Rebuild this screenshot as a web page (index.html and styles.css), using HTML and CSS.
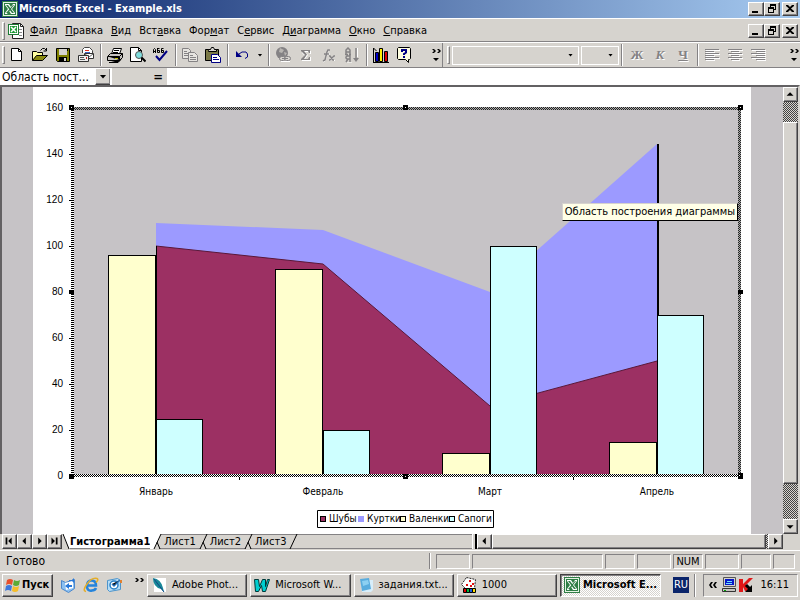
FILE: index.html
```html
<!DOCTYPE html>
<html lang="ru">
<head>
<meta charset="utf-8">
<meta name="viewport" content="width=device-width, initial-scale=1">
<title>Microsoft Excel - Example.xls</title>
<link rel="stylesheet" href="styles.css">
</head>
<body>
<svg class="defs" aria-hidden="true">
  <symbol id="excel" viewBox="0 0 16 16">
    <path fill="#2f7d45" d="M0 0h16v16H0z"/><path fill="#e4f3e4" d="M1 1h14v14H1z"/><path fill="#2f7d45" d="M2 2h12v12H2z"/>
    <path fill="#fff" d="M3 3h4l2 3 2-3h2v1l-3 4 3 4v1H9l-2-3-2 3H3v-1l3-4-3-4z"/>
    <path fill="#2f7d45" d="M4 4h2l6 8h-2zM11 4h1l-6 8H4z"/>
  </symbol>
  <symbol id="left" viewBox="0 0 15 15"><path d="M9 3v8L5 7z"/></symbol>
  <symbol id="right" viewBox="0 0 15 15"><path d="M6 3v8l4-4z"/></symbol>
  <symbol id="more" viewBox="0 0 10 14"><path d="M1 1h2l2 2-2 2H1l2-2zM6 1h2l2 2-2 2H6l2-2zM2 10h6l-3 3z"/></symbol>
</svg>

<header class="titlebar">
  <svg class="i16"><use href="#excel"/></svg>
  <h1>Microsoft Excel - Example.xls</h1>
  <div class="winbtns">
    <button aria-label="Свернуть"><svg viewBox="0 0 14 12"><path d="M3 8h6v2H3z"/></svg></button>
    <button aria-label="Восстановить"><svg viewBox="0 0 14 12"><path d="M5 1h6v6H9V6h1V3H6v1H5zM3 4h6v6H3zm1 2v3h4V6z" fill-rule="evenodd"/></svg></button>
    <button class="close" aria-label="Закрыть"><svg viewBox="0 0 14 12"><path d="M3 2h2l2 2 2-2h2v1L8 5.500 11 8v1H9L7 7 5 9H3V8l3-2.500L3 3z"/></svg></button>
  </div>
</header>

<nav class="menubar">
  <i class="grip"></i>
  <svg class="docicon" viewBox="0 0 16 16"><path fill="#fff" stroke="#222" d="M4.500.5h8l3 3v12h-11z"/><path fill="none" stroke="#222" d="M12.500.5v3h3"/><path stroke="#888" d="M11 6.500h3M11 9.500h3M11 12.500h3"/><path fill="#1e7b35" d="M0 1h11v11H0z"/><path fill="#fff" d="M1 2h9v9H1z"/><path fill="#1e9b35" d="M2 3h7v7H2z"/><path stroke="#fff" stroke-width="1.500" d="M3 4l5 5M8 4L3 9"/></svg>
  <a href="#"><u>Ф</u>айл</a><a href="#"><u>П</u>равка</a><a href="#"><u>В</u>ид</a><a href="#">Вст<u>а</u>вка</a><a href="#">Фор<u>м</u>ат</a><a href="#">С<u>е</u>рвис</a><a href="#">Д<u>и</u>аграмма</a><a href="#"><u>О</u>кно</a><a href="#"><u>С</u>правка</a>
  <div class="winbtns">
    <button aria-label="Свернуть книгу"><svg viewBox="0 0 14 12"><path d="M3 8h6v2H3z"/></svg></button>
    <button aria-label="Восстановить книгу"><svg viewBox="0 0 14 12"><path d="M5 1h6v6H9V6h1V3H6v1H5zM3 4h6v6H3zm1 2v3h4V6z" fill-rule="evenodd"/></svg></button>
    <button class="close" aria-label="Закрыть книгу"><svg viewBox="0 0 14 12"><path d="M3 2h2l2 2 2-2h2v1L8 5.500 11 8v1H9L7 7 5 9H3V8l3-2.500L3 3z"/></svg></button>
  </div>
</nav>

<div class="toolbars">
  <div class="toolbar standard">
    <i class="grip"></i>
    <button class="tool" aria-label="Создать"><svg viewBox="0 0 16 16"><path fill="#fff" stroke="#000" d="M2.500 1.500h7l3 3v9h-10z"/><path fill="none" stroke="#000" d="M9.500 1.500v3h3"/></svg></button>
    <button class="tool" aria-label="Открыть"><svg viewBox="0 0 16 16"><path fill="#ffffa0" stroke="#000" d="M.5 13.500v-9h4l1 1h5v3"/><path fill="#8a8a10" stroke="#000" d="M.5 13.500l4-5h11l-5 5z"/><path fill="none" stroke="#000" d="M8.500 3.500l2-2h2l2 2M14.500 1v3h-3"/></svg></button>
    <button class="tool" aria-label="Сохранить"><svg viewBox="0 0 16 16"><path fill="#808000" stroke="#000" d="M1.500 1.500h13v13h-12l-1-1z"/><path fill="#d6d3ce" d="M4 2h8v6H4z"/><path d="M4 10h8v4H4zM12 2h1v2h-1z"/><path fill="#d6d3ce" d="M9 11h2v3H9z"/></svg></button>
    <button class="tool" aria-label="Отправить"><svg viewBox="0 0 16 16"><path fill="#fff" stroke="#444" d="M4.500 6V2.500l2-2h5l3 3V9"/><path stroke="#e03020" d="M7 3.500h4"/><path stroke="#4060c0" d="M7 5.500h5"/><path fill="#fff" stroke="#333" d="M6.500 6.500h9v5h-9z"/><path fill="none" stroke="#666" d="M7 7l4 3 4-3"/><path fill="#eee" stroke="#333" d="M.5 8.500h10v6H.5z"/><path stroke="#555" d="M2 10.500h4M2 12.500h5"/><path fill="#c02020" d="M8 10h1v2H8z"/></svg></button>
    <i class="sep"></i>
    <button class="tool" aria-label="Печать"><svg viewBox="0 0 16 16"><path fill="#fff" stroke="#000" d="M4.500 7l2-5.500h8L12.500 7z"/><path stroke="#000" d="M7 3.500h5M6 5.500h5"/><path fill="#c6c3c0" stroke="#000" d="M.5 9.500l3-3h12v4l-3 3H.5z"/><path stroke="#000" d="M1 9.500h11.500V13M12.500 9.500l3-3M2 15.500h9l3-3"/><path fill="#cc0" d="M8 11h3v1H8z"/></svg></button>
    <button class="tool" aria-label="Предварительный просмотр"><svg viewBox="0 0 16 16"><path fill="#fff" stroke="#000" d="M.5.5h8l3 3v11H.5z"/><path fill="none" stroke="#000" d="M8.500.5v3h3"/><circle cx="9" cy="8" r="3.500" fill="#7fdede" stroke="#555"/><path stroke="#000" stroke-width="2" d="M11.500 10.500l4 4"/></svg></button>
    <button class="tool" aria-label="Орфография"><svg viewBox="0 0 16 16"><path fill="none" stroke="#000" d="M.5 6V2.500l1-1 1 1V6M.5 4.500h2M4.500 1v4.500h2v-2h-2v-2h2M10.500 1.500h-2v4h2v-2h-2"/><path fill="none" stroke="#000084" stroke-width="2" d="M3 9l3.500 4L14 4"/></svg></button>
    <i class="sep"></i>
    <button class="tool" aria-label="Копировать" disabled><svg viewBox="0 0 16 16"><path fill="#e6e4e0" stroke="#848284" d="M.5 1.500h6l2 2v8h-8z"/><path stroke="#848284" d="M2 4.500h3M2 6.500h5M2 8.500h5"/><path fill="#e6e4e0" stroke="#848284" d="M6.500 5.500h6l3 3v6h-9z"/><path stroke="#848284" d="M8 8.500h3M8 10.500h6M8 12.500h6"/></svg></button>
    <button class="tool" aria-label="Вставить"><svg viewBox="0 0 16 16"><path fill="#7b7946" stroke="#000" d="M.5 2.500h13v11H.5z"/><path fill="#d6d3ce" stroke="#000" d="M3.500 3.500v-1h2l1-2h2l1 2h2v2h-8z"/><path fill="#fff" stroke="#000084" d="M6.500 7.500h6l3 3v5h-9z"/><path stroke="#000084" d="M8 10.500h4M8 12.500h6"/></svg></button>
    <i class="sep"></i>
    <button class="tool" aria-label="Отменить"><svg viewBox="0 0 16 16"><path fill="#000084" d="M2 4v6h6z"/><path fill="none" stroke="#000084" d="M5 7l3-2h4l1.500 2v3L11 11.500"/></svg></button>
    <button class="drop" aria-label="Список отмены"></button>
    <i class="sep"></i>
    <button class="tool" aria-label="Гиперссылка" disabled><svg viewBox="0 0 16 16"><circle cx="7" cy="6" r="6" fill="#848284"/><path fill="#b8b5b1" d="M5 1l4 2-2 3-3-1zM9 5l3 1-2 3z"/><rect x="4.500" y="9.500" width="6" height="4" rx="2" fill="#d6d3ce" stroke="#848284"/><rect x="9.500" y="9.500" width="6" height="4" rx="2" fill="#d6d3ce" stroke="#848284"/><path stroke="#848284" d="M7 11.500h6"/><path stroke="#fff" d="M6 14.500h9"/></svg></button>
    <button class="tool" aria-label="Автосумма" disabled><svg viewBox="0 0 16 16"><path fill="#fff" d="M4 4h9v3h-1l-1-2H7l3 3-3 4h4l1-2h1v4H4v-2l3-3-3-3z"/><path fill="#848284" d="M3 3h9v3h-1l-1-2H6l3 3.500L6 12h4l1-2h1v3H3v-1l4-4-4-4z"/></svg></button>
    <button class="tool" aria-label="Вставка функции" disabled><svg viewBox="0 0 16 16"><path fill="none" stroke="#fff" d="M9 3L8 2.500 7 4 4 14l-2 1M4 7h5M9 9l5 5M14 9l-5 5"/><path fill="none" stroke="#848284" stroke-width="1.500" d="M9 3L7 3 6 5 4 13l-2 1M3 7h5M8 9h1l3 4h1M14 9h-1l-4 4H8"/></svg></button>
    <button class="tool" aria-label="Сортировка" disabled><svg viewBox="0 0 16 16"><path fill="none" stroke="#848284" stroke-width="1.500" d="M2 7V3l2-2 2 2v4M2 5h4M6 15V9H3L2 10v1l1 1h3M4 12l-2 3M1 7.500h3M5 7.500h2M12 1v12"/><path fill="#848284" d="M9 11h6l-3 4z"/><path stroke="#fff" d="M13.500 1v9M3 16h5"/></svg></button>
    <i class="sep"></i>
    <button class="tool" aria-label="Мастер диаграмм"><svg viewBox="0 0 16 16"><path fill="none" stroke="#000" d="M.5 1v14M0 15.500h16M.5 1l3 3"/><path stroke="#000" fill="#0000c8" d="M2.500 5.500h3v9h-3z"/><path stroke="#000" fill="#ffef00" d="M6.500 1.500h3v13h-3z"/><path stroke="#000" fill="#e00000" d="M11.500 4.500h3v10h-3z"/></svg></button>
    <button class="tool" aria-label="Справка"><svg viewBox="0 0 16 16"><path fill="#ffffe0" stroke="#000" d="M2.500.5h11l1 1v10l-1 1h-1v3l-3-3h-7l-1-1v-10z"/><path fill="none" stroke="#000084" stroke-width="2" d="M6 5V3h4v2.500L8 7v1M8 9v2"/></svg></button>
    <button class="more" aria-label="Другие кнопки"><svg viewBox="0 0 10 14"><use href="#more"/></svg></button>
  </div>
  <div class="toolbar format">
    <i class="grip"></i>
    <label class="combo font"><select aria-label="Шрифт" disabled></select></label>
    <label class="combo size"><select aria-label="Размер" disabled></select></label>
    <i class="sep"></i>
    <button class="tool letter" disabled>Ж</button>
    <button class="tool letter" disabled><em>К</em></button>
    <button class="tool letter" disabled><u>Ч</u></button>
    <i class="sep"></i>
    <button class="tool" aria-label="По левому краю" disabled><svg viewBox="0 0 16 16"><path stroke="#848284" d="M1 2.500h14M1 4.500h9M1 6.500h14M1 8.500h9M1 10.500h14M1 12.500h9"/><path stroke="#fff" d="M2 3.500h14M2 5.500h9M2 7.500h14M2 9.500h9M2 11.500h14M2 13.500h9"/></svg></button>
    <button class="tool" aria-label="По центру" disabled><svg viewBox="0 0 16 16"><path stroke="#848284" d="M1 2.500h14M4 4.500h8M1 6.500h14M4 8.500h8M1 10.500h14M4 12.500h8"/><path stroke="#fff" d="M2 3.500h14M5 5.500h8M2 7.500h14M5 9.500h8M2 11.500h14M5 13.500h8"/></svg></button>
    <button class="tool" aria-label="По правому краю" disabled><svg viewBox="0 0 16 16"><path stroke="#848284" d="M1 2.500h14M6 4.500h9M1 6.500h14M6 8.500h9M1 10.500h14M6 12.500h9"/><path stroke="#fff" d="M2 3.500h14M7 5.500h9M2 7.500h14M7 9.500h9M2 11.500h14M7 13.500h9"/></svg></button>
    <button class="more" aria-label="Другие кнопки форматирования"><svg viewBox="0 0 10 14"><use href="#more"/></svg></button>
  </div>
</div>

<div class="formulabar">
  <input class="namebox" aria-label="Имя" value="Область пост...">
  <button class="raised namedrop" aria-label="Список имён"></button>
  <button class="equals">=</button>
  <input class="formula" aria-label="Строка формул">
</div>

<main class="workspace">
  <div class="sheet">
    <svg class="chart" viewBox="33 87 718 447" role="img" aria-label="Диаграмма">
      <defs>
        <pattern id="ph" width="2" height="2" patternUnits="userSpaceOnUse"><path fill="#fff" d="M0 0h2v2H0z"/><path fill="#000" d="M0 0h1v1H0zM1 1h1v1H1z"/></pattern>
        <pattern id="pv" width="4" height="2" patternUnits="userSpaceOnUse"><path fill="#fff" d="M0 0h4v2H0z"/><path fill="#000" d="M0 0h4v1H0z"/></pattern>
        <pattern id="pg" width="2" height="2" patternUnits="userSpaceOnUse"><path fill="#aaa" d="M0 0h2v2H0z"/><path fill="#222" d="M0 0h1v1H0zM1 1h1v1H1z"/></pattern>
      </defs>
      <path class="plot" d="M74 109h665v366H74z"/>
      <path fill="#9c9aff" d="M156 223l167 7 167 62 167-148v331H156z"/>
      <path fill="#9c3063" d="M156 246l167 18 167 142 167-45v114H156z"/>
      <path fill="none" stroke="#5a1838" d="M156 246l167 18 167 142 167-45"/>
      <g class="edges"><path d="M156 246h1v230h-1zM657 144h2v332h-2z"/></g>
      <g class="b1"><path d="M108.500 255.500h47v220h-47zM275.500 269.500h47v206h-47zM442.500 453.500h47v22h-47zM609.500 442.500h47v33h-47z"/></g>
      <g class="b2"><path d="M156.500 419.500h46v56h-46zM323.500 430.500h46v45h-46zM490.500 246.500h46v229h-46zM657.500 315.500h46v160h-46z"/></g>
      <g class="edges">
        <path fill="url(#pg)" d="M72 107h668v3H72zM738 107h3v369h-3z"/>
        <path fill="url(#pv)" d="M71 109h3v368h-3z"/><path fill="url(#ph)" d="M71 474h670v3H71z"/>
        <path d="M69 105h5v5h-5zM403 105h5v5h-5zM738 105h5v5h-5zM69 290h5v4h-5zM738 290h5v4h-5zM69 474h5v5h-5zM403 474h5v5h-5zM738 473h5v6h-5z"/>
        <path d="M69 154h2v1h-2zM69 200h2v1h-2zM69 246h2v1h-2zM69 338h2v1h-2zM69 384h2v1h-2zM69 430h2v1h-2zM239 477h1v3h-1zM573 477h1v3h-1z"/>
        <path fill="#fff" d="M71 107h1v1h-1zM405 107h1v1h-1zM740 107h1v1h-1zM405 476h1v1h-1zM739 475h1v1h-1z"/>
      </g>
      <g class="axis">
        <text x="63" y="111">160</text><text x="63" y="157">140</text><text x="63" y="203">120</text><text x="63" y="249">100</text><text x="63" y="295">80</text><text x="63" y="341">60</text><text x="63" y="387">40</text><text x="63" y="433">20</text><text x="63" y="479">0</text>
      </g>
      <g class="cats"><text x="156" y="495">Январь</text><text x="323" y="495">Февраль</text><text x="490" y="495">Март</text><text x="657" y="495">Апрель</text></g>
      <path class="box" d="M317.500 510.500h176v17h-176z"/>
      <g class="keys"><path fill="#9c3063" d="M320.500 516.500h5v5h-5z"/><path fill="#9c9aff" stroke="none" d="M358 516h6v6h-6z"/><path fill="#ffffce" d="M400.500 516.500h5v5h-5z"/><path fill="#ceffff" d="M449.500 516.500h5v5h-5z"/></g>
      <g class="legend"><text x="329" y="522">Шубы</text><text x="367" y="522">Куртки</text><text x="409" y="522">Валенки</text><text x="458" y="522">Сапоги</text></g>
    </svg>
    <div class="tooltip" role="tooltip">Область построения диаграммы</div>
  </div>
  <div class="vscroll">
    <button class="raised" aria-label="Вверх"><svg viewBox="0 0 15 15"><path d="M3 9h8L7 5z"/></svg></button>
    <div class="vtrack"><div class="raised vthumb"></div></div>
    <button class="raised" aria-label="Вниз"><svg viewBox="0 0 15 15"><path d="M3 6h8l-4 4z"/></svg></button>
  </div>
</main>

<div class="tabrow">
  <button class="raised" aria-label="Первый лист"><svg viewBox="0 0 15 15"><path d="M3 3h2v8H3zM10 3v8L6 7z"/></svg></button>
  <button class="raised" aria-label="Предыдущий лист"><svg viewBox="0 0 15 15"><use href="#left"/></svg></button>
  <button class="raised" aria-label="Следующий лист"><svg viewBox="0 0 15 15"><use href="#right"/></svg></button>
  <button class="raised" aria-label="Последний лист"><svg viewBox="0 0 15 15"><path d="M9 3h2v8H9zM4 3v8l4-4z"/></svg></button>
  <svg class="slash" viewBox="0 0 8 16"><path fill="#fff" d="M0 0h8v16z"/><path stroke="#000" d="M1 0l6 15"/></svg>
  <button class="tab active">Гистограмма1</button>
  <svg class="slash wide" viewBox="0 0 14 16"><path fill="#fff" d="M0 0h11L4 15H0z"/><path stroke="#848284" d="M11 .5h3M9 14.500h5"/><path stroke="#000" d="M11 0L4 15M7 8l3 7"/></svg>
  <button class="tab">Лист1</button>
  <svg class="slash wide" viewBox="0 0 14 16"><path stroke="#848284" d="M0 .5h14M0 14.500h5M9 14.500h5"/><path stroke="#000" d="M11 0L4 15M7 8l3 7"/></svg>
  <button class="tab">Лист2</button>
  <svg class="slash wide" viewBox="0 0 14 16"><path stroke="#848284" d="M0 .5h14M0 14.500h5M9 14.500h5"/><path stroke="#000" d="M11 0L4 15M7 8l3 7"/></svg>
  <button class="tab">Лист3</button>
  <svg class="slash wide" viewBox="0 0 14 16"><path stroke="#848284" d="M0 .5h14M0 14.500h14"/><path stroke="#000" d="M11 0L4 15"/></svg>
  <div class="tabfill"></div>
  <div class="hscroll">
    <i class="splitter"></i>
    <button class="raised" aria-label="Влево"><svg viewBox="0 0 15 15"><use href="#left"/></svg></button>
    <div class="htrack"><div class="raised hthumb"></div></div>
    <button class="raised" aria-label="Вправо"><svg viewBox="0 0 15 15"><use href="#right"/></svg></button>
  </div>
</div>

<footer class="statusbar">
  <span class="ready">Готово</span>
  <i class="sep"></i>
  <span class="cell w34"></span><span class="cell grow"></span><span class="cell w30"></span><span class="cell w34"></span><span class="cell w30">NUM</span><span class="cell w34"></span><span class="cell w30"></span><span class="cell w22"></span>
</footer>

<nav class="taskbar">
  <button class="task start"><svg viewBox="0 0 16 16"><path fill="#e8502c" d="M2 3q3-2 6 0L7 8Q4 6 1 8z"/><path fill="#5cab35" d="M9 3q3 2 6 0l-1 5q-3 2-6 0z"/><path fill="#3d78dc" d="M1 9q3-2 6 0l-1 5q-3-2-6 0z"/><path fill="#f6bd28" d="M8 9q3 2 6 0l-1 5q-3 2-6 0z"/></svg>Пуск</button>
  <div class="quick">
    <button aria-label="Рабочий стол"><svg viewBox="0 0 16 16"><path fill="#8cc0f0" stroke="#4c88cc" d="M1.500 3.500l4 2 9-3v9l-6 4-7-4z"/><path fill="#fff" d="M5 6l8-2v7l-7 2z"/><path fill="#2878d8" d="M5 9l4-3v2h3v2H9v2zM9 3h3l2-2v5l-2-2H9z"/></svg></button>
    <button aria-label="Internet Explorer"><svg viewBox="0 0 16 16"><path fill="none" stroke="#2484dc" stroke-width="2.500" d="M4 8.500h9q0-5-4.500-5T4 9t5 4.500q3 0 4-2.500"/><path fill="none" stroke="#e6ae28" stroke-width="1.500" d="M3 14.500Q-1 14 4 7t10-5.500q2 1-1 4"/></svg></button>
    <button aria-label="Outlook Express"><svg viewBox="0 0 16 16"><path fill="#b4dcf6" stroke="#4c94cc" d="M1.500 3.500l10-2 3 2v9l-11 2-2-2z"/><circle cx="8" cy="8" r="4" fill="#fff" stroke="#2880c8" stroke-width="1.500"/><path stroke="#2870b8" stroke-width="1.500" d="M6 7l2 2 6-6"/><path fill="#e08030" d="M14 3h2v3h-2z"/></svg></button>
    <button class="chev" aria-label="Ещё"><svg viewBox="0 0 10 14"><path d="M1 1h2l2 2-2 2H1l2-2zM6 1h2l2 2-2 2H6l2-2z"/></svg></button>
  </div>
  <div class="tasks">
    <button class="task"><svg viewBox="0 0 16 16"><path fill="#fff" d="M3 1h12v14H3z"/><path fill="#188898" d="M2 1q8 1 10 10l1 4-3-3Q2 10 2 1z"/><path stroke="#104888" d="M3 2l10 13"/></svg><span>Adobe Phot...</span></button>
    <button class="task"><svg viewBox="0 0 16 16"><path fill="#00ced0" stroke="#003838" d="M.5 2.500h4l1 7 3-7h3l0 7 2-7h2l-4 12h-3l-1-6-3 6h-3z"/></svg><span>Microsoft W...</span></button>
    <button class="task"><svg viewBox="0 0 16 16"><path fill="#d8eefa" d="M3 3h12v10l-2 2H4z"/><path fill="#58acde" d="M2 2l9-1 2 11-9 2z"/><path fill="#8cd0f2" d="M4 4l6-1 1 4-6 2z"/></svg><span>задания.txt...</span></button>
    <button class="task"><svg viewBox="0 0 16 16"><path fill="#fff" stroke="#222" stroke-dasharray="2 1" d="M5.500.5l9 2-1 9H4.500l-4-4z"/><path fill="#e01010" d="M8 3h2v2H8zM11 6h2v2h-2zM5 7h2v2H5zM9 8h2v2H9z"/><path stroke="#000" fill="#e00000" d="M2.500 11.500h3v4h-3z"/><path stroke="#000" fill="#00b840" d="M5.500 11.500h3v4h-3z"/><path stroke="#000" fill="#2060e0" d="M8.500 11.500h3v4h-3z"/><path stroke="#000" fill="#ffe000" d="M11.500 11.500h3v4h-3z"/></svg><span>1000</span></button>
    <button class="task pressed"><svg><use href="#excel"/></svg><span>Microsoft E...</span></button>
  </div>
  <button class="lang">RU</button>
  <i class="sep"></i>
  <div class="tray">
    <button class="expand" aria-label="Скрытые значки"><svg viewBox="0 0 8 6"><path d="M4 0H2L0 3l2 3h2L2 3zM8 0H6L4 3l2 3h2L6 3z"/></svg></button>
    <svg class="i16" viewBox="0 0 16 16"><path fill="#d6d3ce" stroke="#555" d="M2.500.5h12v9h-12z"/><path fill="#0818c8" d="M4 2h9v6H4z"/><path stroke="#70e0ff" d="M6 4.500h5M5 6.500h6"/><path fill="#c6c3c0" stroke="#333" d="M1.500 11.500h13v3h-13z"/><path stroke="#00a000" d="M3 13.500h2"/></svg>
    <svg class="i16 kav" viewBox="0 0 16 16"><path fill="#e01818" d="M1 2h4v5l6-6h4L8 8l3 6H7L5 10v5H1z"/><path stroke="#000" stroke-width="3" d="M8 8l5 5"/><path d="M14 8v7H7z"/></svg>
    <time>16:11</time>
  </div>
</nav>
</body>
</html>
```
FILE: styles.css
```css
* { box-sizing: border-box; }

body {
  margin: 0;
  height: 100vh;
  display: flex;
  flex-direction: column;
  overflow: hidden;
  background: #d6d3ce;
  color: #000;
  font: 11px/14px "DejaVu Sans Condensed", "DejaVu Sans", sans-serif;
}

button, input, select {
  font: inherit;
  color: inherit;
  margin: 0;
  padding: 0;
  border: 0;
  border-radius: 0;
  background: none;
  outline: 0;
}

svg { display: block; flex: none; }
button svg { width: 100%; height: 100%; }
.defs { position: absolute; width: 0; height: 0; }
.i16 { width: 16px; height: 16px; }

.raised, .winbtns button, .task {
  background: #d6d3ce;
  border: 1px solid;
  border-color: #fff #424142 #424142 #fff;
  box-shadow: inset -1px -1px #848284;
}

.sep {
  flex: none;
  width: 2px;
  margin: 0 2px;
  align-self: stretch;
  border-left: 1px solid #848284;
  border-right: 1px solid #fff;
}

.grip {
  flex: none;
  width: 3px;
  height: 18px;
  border: 1px solid;
  border-color: #fff #848284 #848284 #fff;
}

/* Title bar */
.titlebar {
  flex: none;
  display: flex;
  align-items: center;
  height: 18px;
  padding: 0 2px;
  color: #fff;
  background: linear-gradient(90deg, #0a246a, #a6caf0);
}
.titlebar h1 { margin: 0 0 0 1px; font-size: 11px; font-weight: bold; white-space: nowrap; }
.winbtns { display: flex; margin-left: auto; }
.winbtns button { width: 16px; height: 14px; color: #000; }
.winbtns .close { margin-left: 2px; }

/* Menu bar */
.menubar {
  flex: none;
  display: flex;
  align-items: center;
  height: 24px;
  padding: 2px 2px 0;
  border-top: 1px solid #fff;
  border-bottom: 1px solid #848284;
}
.menubar a { margin-right: 8px; color: inherit; text-decoration: none; white-space: nowrap; }
.docicon { width: 16px; height: 16px; margin: 0 6px 0 3px; }

/* Toolbars */
.toolbars {
  flex: none;
  display: flex;
  height: 26px;
  border-top: 1px solid #fff;
  border-bottom: 1px solid #848284;
}
.toolbar { display: flex; align-items: center; padding: 1px 0 1px 2px; }
.standard { flex: none; width: 443px; border-right: 1px solid #848284; }
.format { flex: 1; padding-left: 4px; }
.tool { flex: none; width: 23px; height: 22px; padding: 3px 4px 3px 3px; }
.tool:first-of-type { margin-left: 1px; }
.letter { font: bold 13px/16px "Liberation Serif", serif; color: #848284; text-shadow: 1px 1px #fff; }
.drop { width: 12px; height: 22px; }
.drop::after, .combo::after, .namedrop::after {
  content: "";
  display: block;
  width: 5px;
  height: 3px;
  margin: auto;
  background: #000;
  clip-path: polygon(0 0, 100% 0, 50% 100%);
}
.more { width: 10px; height: 14px; margin: 0 1px 0 auto; }
.combo { display: flex; align-items: center; height: 19px; margin-left: 2px; padding-right: 5px; border: 1px solid #fff; }
.combo select { appearance: none; flex: 1; min-width: 0; height: 16px; opacity: 1; }
.combo::after { margin: 0; }
.font { width: 127px; }
.size { width: 38px; }

/* Formula bar */
.formulabar { flex: none; display: flex; height: 17px; background: #fff; }
.namebox { width: 95px; padding: 0 2px; font-size: 12px; }
.namedrop { width: 16px; }
.namedrop::after { width: 7px; height: 4px; }
.equals {
  width: 57px;
  margin-left: -1px;
  padding-right: 4px;
  text-align: right;
  font-size: 13px;
  font-weight: bold;
  background: #d6d3ce;
  border-left: 2px solid #fff;
}
.formula { flex: 1; min-width: 0; background: #fff; }

/* Chart sheet */
.workspace {
  flex: 1;
  min-height: 0;
  display: flex;
  border: 2px solid;
  border-color: #636163 #d6d3ce #d6d3ce #636163;
  border-bottom: 0;
  background: #c6c3c6;
}
.sheet { position: relative; flex: 1; min-width: 0; margin: 0 32px 0 31px; background: #fff; }
.chart { width: 100%; height: 100%; }
.plot { fill: #c6c3c6; }
.edges, .b1, .b2, .keys { shape-rendering: crispEdges; }
.b1 { fill: #ffffce; stroke: #000; }
.b2 { fill: #ceffff; stroke: #000; }
.keys, .box { stroke: #000; }
.box { fill: #fff; }
.axis { font: 10px "Liberation Sans", sans-serif; text-anchor: end; }
.cats { font: 10px "DejaVu Sans Condensed", sans-serif; text-anchor: middle; }
.legend { font: 10px "DejaVu Sans Condensed", sans-serif; }
.tooltip {
  position: absolute;
  right: 13px;
  top: 116px;
  padding: 1px 2px;
  background: #ffffe7;
  border: 1px solid;
  border-color: #d6d3ce #000 #000 #d6d3ce;
  white-space: nowrap;
}

.vscroll { flex: none; width: 15px; display: flex; flex-direction: column; }
.vscroll button { height: 15px; }
.vtrack, .htrack {
  flex: 1;
  display: flex;
  background: repeating-conic-gradient(#424142 0 25%, #d6d3ce 0 50%) 0 0 / 2px 2px;
}
.vtrack { padding: 20px 0 35px; }
.vthumb, .hthumb { flex: 1; }

/* Sheet tabs */
.tabrow { flex: none; display: flex; height: 16px; padding-left: 2px; border-bottom: 1px solid #d6d3ce; }
.tabrow .raised { width: 15px; height: 15px; }
.slash { width: 8px; height: 16px; }
.wide { width: 14px; }
.tab { border: 1px solid #848284; border-width: 1px 0; height: 15px; line-height: 13px; }
.active { font-weight: bold; background: #fff; border-top-color: #fff; }
.tabfill { flex: 1; height: 15px; border-top: 1px solid #848284; border-bottom: 1px solid #848284; }
.hscroll { flex: none; width: 39%; display: flex; margin-right: 17px; }
.splitter { width: 5px; border-left: 1px solid #fff; border-right: 2px solid #000; }
.htrack { height: 15px; padding-right: 2px; }
.tabrow .hthumb { width: auto; }

/* Status bar */
.statusbar {
  flex: none;
  display: flex;
  align-items: center;
  gap: 2px;
  height: 21px;
  padding: 2px 5px 2px 6px;
  border-top: 1px solid #fff;
}
.ready { width: 421px; font-size: 12px; }
.statusbar .sep { margin: 0 3px 0 0; }
.cell {
  height: 15px;
  border: 1px solid;
  border-color: #848284 #fff #fff #848284;
  text-align: center;
  line-height: 14px;
}
.w34 { width: 34px; }
.w30 { width: 30px; }
.w22 { width: 22px; }
.grow { flex: 1; }

/* Taskbar */
.taskbar {
  flex: none;
  display: flex;
  align-items: center;
  height: 29px;
  padding: 0 2px 2px;
  border-top: 1px solid #fff;
}
.task { display: flex; align-items: center; gap: 3px; height: 23px; padding: 0 3px; white-space: nowrap; }
.task svg { width: 16px; height: 16px; }
.start { width: 51px; padding: 0 2px; gap: 1px; font-weight: bold; }
.quick { display: flex; margin-left: 7px; gap: 7px; width: 87px; }
.quick button { width: 16px; height: 16px; }
.quick .chev { width: 10px; height: 14px; margin-left: 5px; }
.tasks { flex: 1; display: flex; gap: 3px; }
.tasks .task { flex: 1; gap: 5px; }
.tasks .pressed {
  font-weight: bold;
  gap: 3px;
  border-color: #424142 #fff #fff #424142;
  box-shadow: inset 1px 1px #848284;
  background: repeating-conic-gradient(#fff 0 25%, #d6d3ce 0 50%) 0 0 / 2px 2px;
}
.lang { width: 16px; height: 16px; margin: 0 3px 0 12px; color: #fff; background: #0a246a; }
.taskbar > .sep { height: 23px; align-self: center; }
.tray {
  display: flex;
  align-items: center;
  width: 95px;
  height: 23px;
  margin-left: 5px;
  padding: 0 8px 0 5px;
  border: 1px solid;
  border-color: #848284 #fff #fff #848284;
}
.tray .expand { width: 8px; height: 6px; margin-right: 4px; }
.tray .kav { margin-left: 1px; }
.tray time { margin-left: auto; }
```
